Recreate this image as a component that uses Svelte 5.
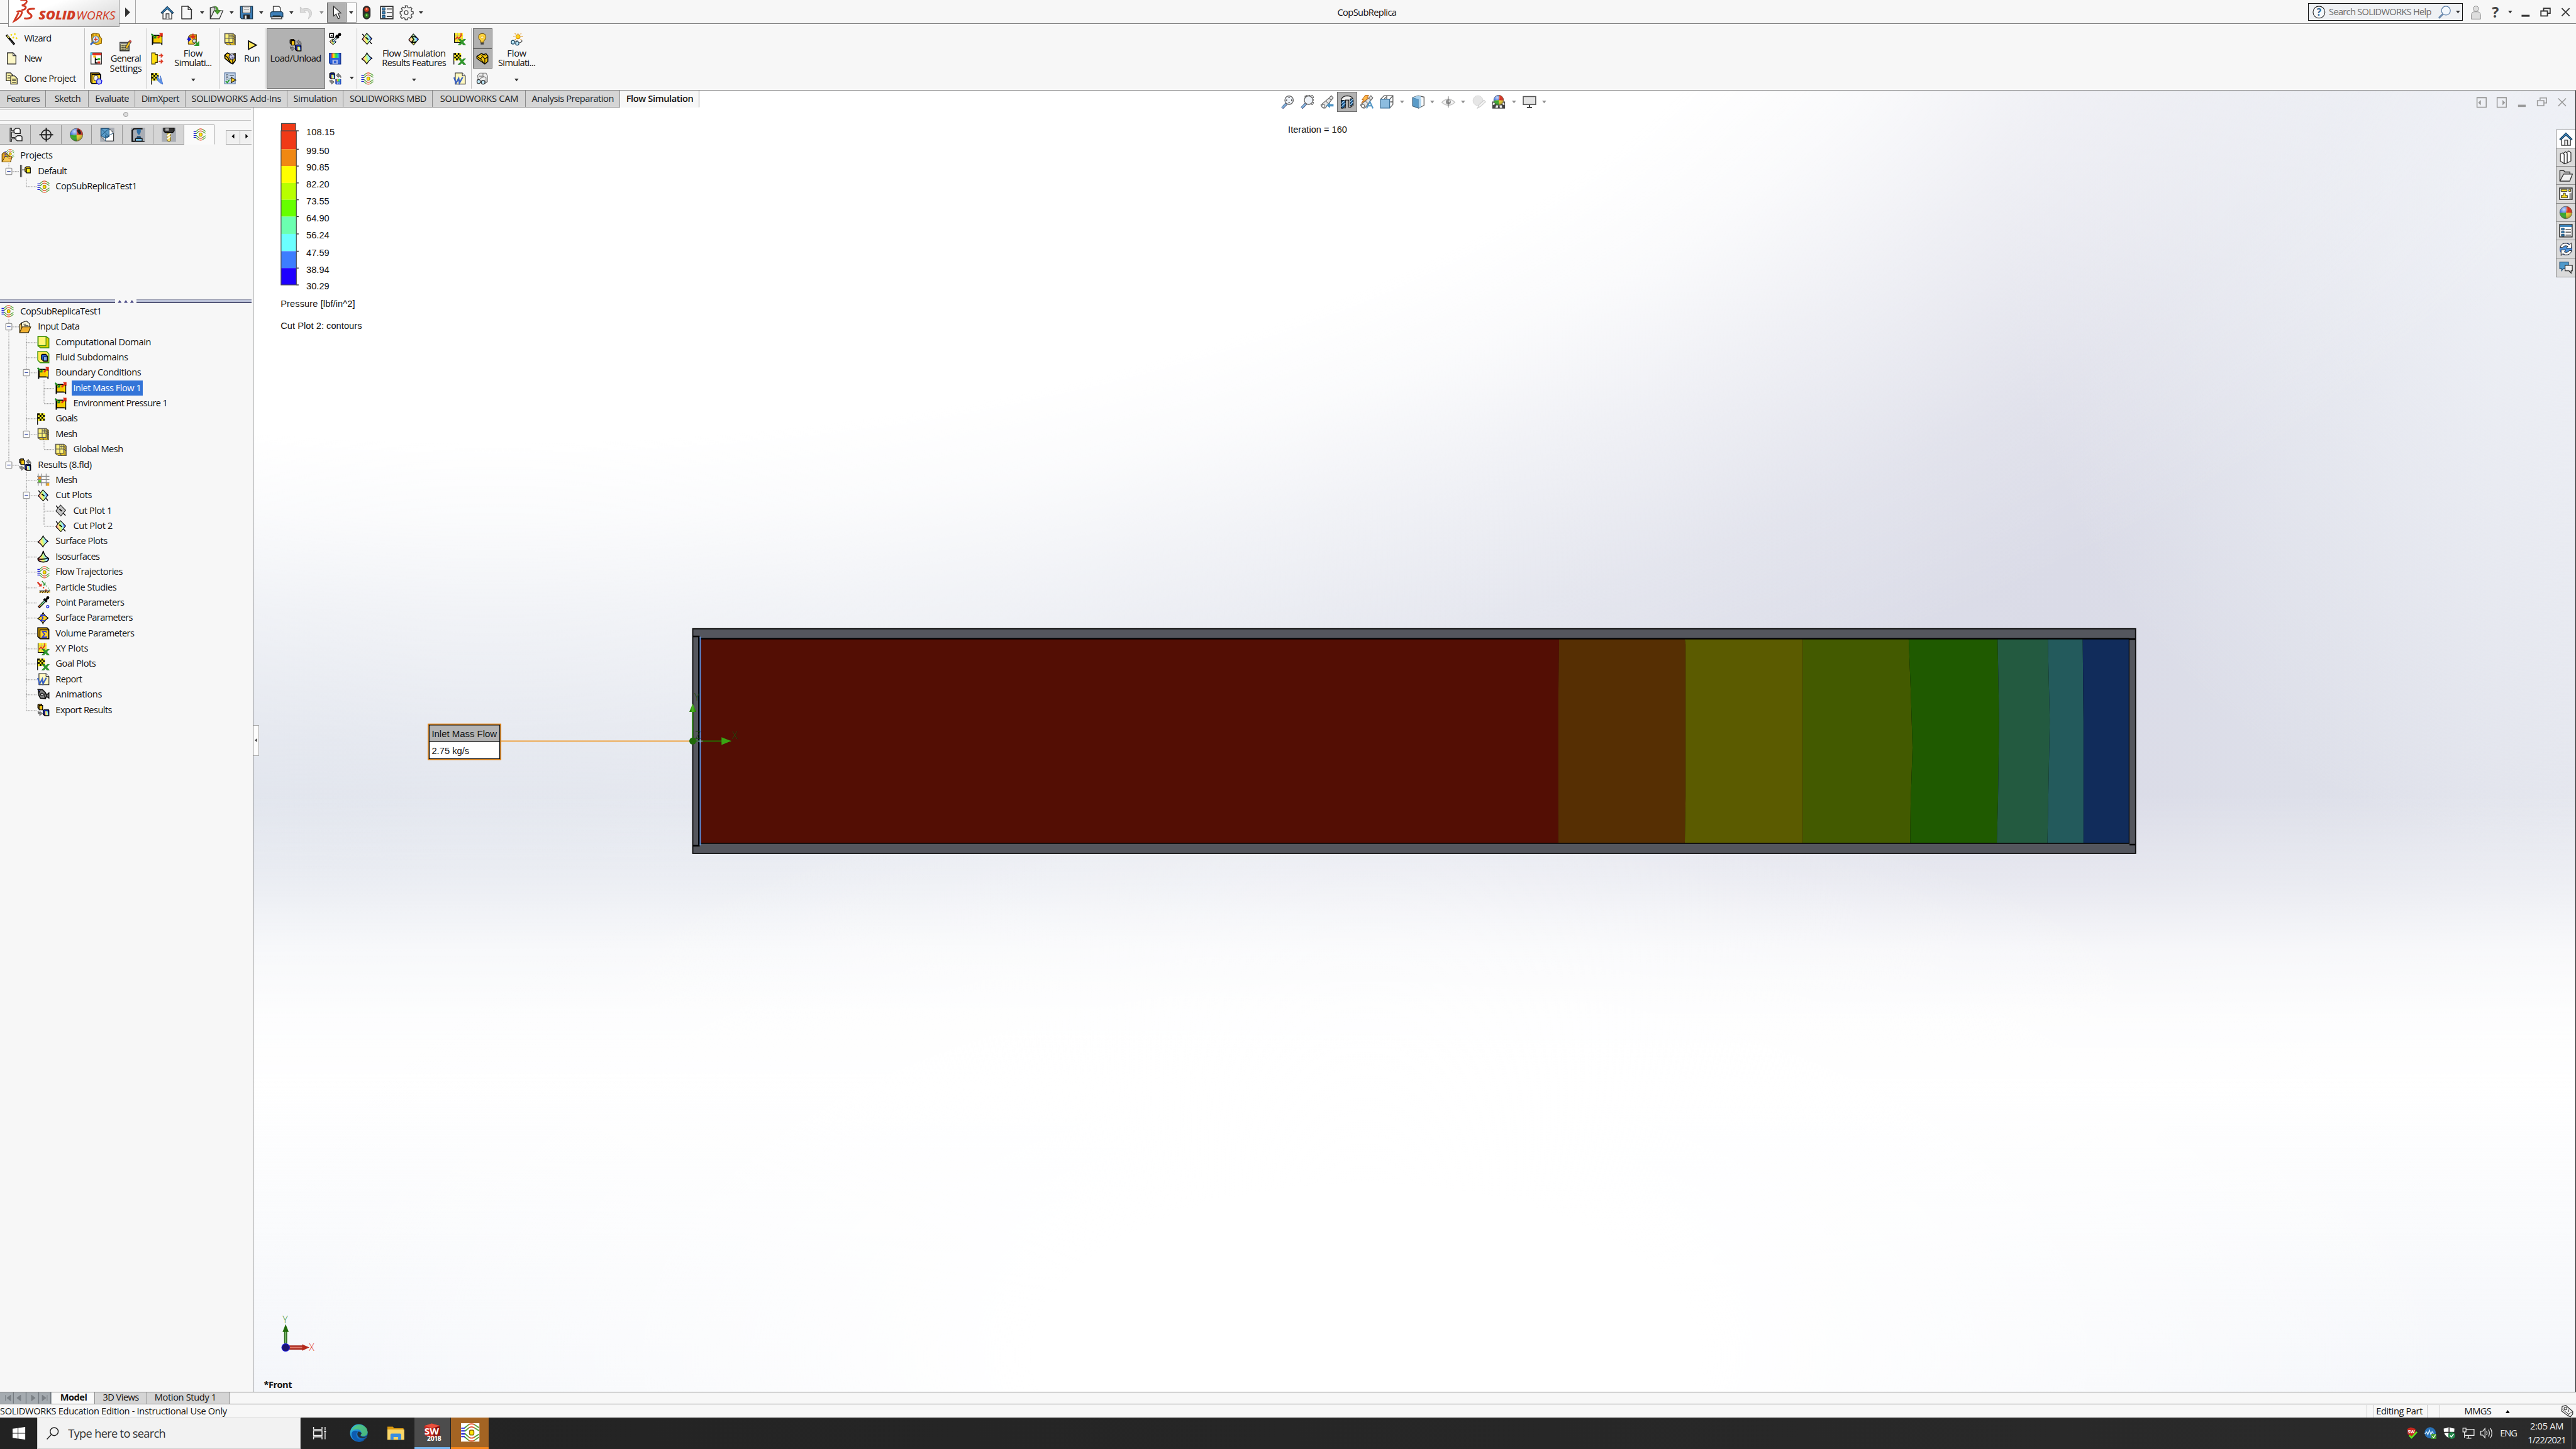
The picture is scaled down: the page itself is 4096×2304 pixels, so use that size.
<script>
  // Squeezes or opens the tracking of a label so that it occupies a given width.
  function fit(node, width) {
    const app = node.closest('.app');
    if (!app || !width) return;
    const unit = app.getBoundingClientRect().width / 6720;
    const natural = node.getBoundingClientRect().width / unit;
    const count = node.textContent.length;
    node.style.letterSpacing = `${((width - natural) / count).toFixed(3)}px`;
  }

  const diamond = 'M7.5 0.8L14.2 7.6L8 15.2L1.5 8.6Z';
  const flag =
    '<path d="M.6 1V16" stroke="#000" stroke-width="1"/><path d="M1 1L10 1V10.5L1 11Z" fill="#fff01e"/><path d="M1 1h2.4v2.4H1zM5.6 1h2.2v2.4H5.6zM3.3 3.3h2.3v2.4H3.3zM7.8 3.3H10v2.4H7.8zM1 5.7h2.4V8H1zM5.6 5.7h2.2V8H5.6zM3.3 8h2.3v2.6H3.3zM7.8 8H10v2.5H7.8z" fill="#000"/>';
  const excel =
    '<path d="M6.5 8.5h3l1.4 2 2.6-2H16l-3.4 3.6L16 16h-3.2l-1.6-2L9 16H6l3.7-3.7Z" fill="#2f9a2a" stroke="#156f17" stroke-width=".5"/>';
  const traj =
    '<g fill="none" stroke="url(#stream)" stroke-width="1"><path d="M.4 4.4H3.2L7 1.3Q9.5.2 12 1.3L16 4"/><path d="M.4 6.8H4L7.6 3.8Q9.5 2.900 11.4 3.8L16 6.600"/><path d="M.4 9.400H4L7.600 12.600Q9.500 13.500 11.400 12.600L16 9.600"/><path d="M.4 11.800H3.200L7 15Q9.500 16 12 15L16 12.200"/></g><rect x="7.700" y="6.100" width="3.800" height="4.300" rx="1.300" fill="#ffe60a" stroke="#8a6a00" stroke-width=".8"/>';
  const boundary =
    '<path d="M2.4 3.6H13.4V13.4H2.4Z" fill="#f5c800" stroke="#000" stroke-width="1.5"/><path d="M2 3V16M14.2 4V16" stroke="#000" stroke-width="1.5"/><path d="M12 5h2v8h-2z" fill="#ffe000"/><path d="M.6 1.6L4 5" stroke="#1b8a1e" stroke-width="2"/><path d="M2.5 7.6H7V3Z" fill="#1b8a1e"/><path d="M9 7L14 2" stroke="#e02b18" stroke-width="2"/><path d="M10.5.4H15.4V5.6Z" fill="#e02b18"/>';
  const meshcube =
    '<path d="M1 1H12L15 3.5V16H5L1 13.5Z" fill="#e8c21c" stroke="#555" stroke-width=".9"/><path d="M1.5 1.4H11.6V12.8H1.5Z" fill="#fff27a" stroke="#555" stroke-width=".9"/><path d="M6.6 1V13M1 7.4H12M9.3 1V7M6.6 4.2H12M13.4 3V15M12 7.5L15 9.5M12 4.3L15 6.3M7 13L9 16" stroke="#555" stroke-width=".9" fill="none"/>';
  const greyArrows =
    '<path d="M9.5 4L12.5 1V2.8Q16 3 15.6 7Q14.6 4.8 12.5 5V6.8Z" fill="#8a8a8a" stroke="#444" stroke-width=".6"/>';
  const loadCubes =
    '<path d="M1 1.4L2.5.6H6V6.8H3.4L1 5.4Z" fill="#b08000" stroke="#000"/><path d="M2.6 2.2H7.2V8H2.6Z" fill="#f7c613" stroke="#000" stroke-width="1"/><path d="M8 8.4L10 7.6H14.8L15.4 9V15.4H10L8 14Z" fill="#1733c4" stroke="#000"/><path d="M10 9.4H15V15.4H10Z" fill="url(#rb)" stroke="#000" stroke-width=".8"/>';
  const disk = (x, y, s) =>
    `<g transform="translate(${x} ${y}) scale(${s})"><path d="M.6 1.4H15.4V15.4H2L.6 14Z" fill="#2e62d9" stroke="#10308e" stroke-width="1"/><path d="M3.4 1.4h9.4v6H3.4z" fill="url(#rbh)"/><path d="M4.6 9.8h7v5.6h-7z" fill="#a7b6e8"/><path d="M6.6 11.2h3v3h-3z" fill="#2e62d9"/></g>`;
  const word =
    '<path d="M2.4.8H11.6L15.4 4.6V15.4H2.4Z" fill="#fff9c0" stroke="#222" stroke-width=".9"/><path d="M11.6.8V4.6H15.4" fill="#fff" stroke="#222" stroke-width=".8"/><path d="M.8 6.6L3.4 14L6.8 8L7.8 14L12 6.4" stroke="#3b62c4" stroke-width="1.9" fill="none"/>';
  const ball =
    '<circle cx="8" cy="8" r="7.2" fill="#e4c92c"/><path d="M8 8L8.6.8A7.2 7.2 0 0 1 15.2 8.4Z" fill="#d42f1d"/><path d="M8 8L8.6.8A7.2 7.2 0 0 0 .8 8.6Z" fill="#3a6fe0"/><path d="M8 8L.8 8.6A7.2 7.2 0 0 0 8.4 15.2Z" fill="#34a527"/><circle cx="8" cy="8" r="7.2" fill="url(#gloss)" stroke="#555" stroke-width=".5"/>';
  const sheet = (fill) =>
    `<path d="M2.2 .8H9.6L13.4 4.6V15.4H2.2Z" fill="${fill}" stroke="#333" stroke-width="1.1" stroke-linejoin="round"/><path d="M9.6.8V4.6H13.4Z" fill="#fff" stroke="#333" stroke-width=".9"/>`;
  const magnifier = (inner) =>
    `<path d="M7 10L2 15.2" stroke="#447" stroke-width="3"/><path d="M6.8 10.2L2 15" stroke="#7fb2d8" stroke-width="2"/><circle cx="10" cy="6" r="4.9" fill="#eef2f8" stroke="#666" stroke-width="1"/>${inner}`;
  const telescope =
    '<path d="M1 11.6L10.6 3.4L13 .8L15.2 3.4L13.4 5.6L6.2 15Q3 16.4 1 11.6Z" fill="#e4e4e4" stroke="#666" stroke-width=".9"/><circle cx="3.8" cy="12.8" r="1.8" fill="#fff" stroke="#777" stroke-width=".8"/><path d="M10.4 3.6L13 6.2M6.6 7L9.6 10" stroke="#777" stroke-width=".8"/>';
  const folder =
    '<path d="M1 14.6V2.4H5.4L6.8 4H12.6V6.4" fill="#c9c9c9" stroke="#333" stroke-width="1"/><path d="M1 14.6L5.4 6.4H15.6L12.4 14.6Z" fill="#f2f2f2" stroke="#333" stroke-width="1" stroke-linejoin="round"/>';
  const sigma = (c, x = 0, y = 0) =>
    `<path transform="translate(${x} ${y})" d="M10.4 5.6V4.4H5.4L8.2 8L5.2 11.6H10.6V10.4" fill="none" stroke="${c}" stroke-width="1.3"/>`;

  const icons = {
    wand: '<path d="M1 3L11.4 15.4" stroke="#000" stroke-width="2.8"/><path d="M1.8 3.6L4.4 6.8" stroke="#fff36b" stroke-width="1.3"/><path d="M5 9L11 15" stroke="#777" stroke-width=".6"/><path d="M7.4 1.6v2.4M6.2 2.8h2.4M12 .6V3M10.8 1.8H13.2M10 5.2V7.6M8.8 6.4h2.4M14.2 6V8.4M13 7.2h2.4" stroke="#f4d800" stroke-width="1.1"/>',
    newdoc: sheet('#fbf6c6'),
    clone:
      '<path d="M.8.8H6.4L9 3.4V11H.8Z" fill="#fff6a8" stroke="#222"/><path d="M2.4 4.5H6M2.4 6.5H6M2.4 8.5H6" stroke="#222" stroke-width=".8"/><path d="M6.6 4.6H11.6L15 8V15.2H6.6Z" fill="#fff6a8" stroke="#222"/><path d="M8.4 9h5M8.4 11h5M8.4 13h5" stroke="#222" stroke-width=".9"/>',
    inspect:
      '<path d="M2 2L5 .8L12 1.6L13 5L15.4 8L15 14L9 15.6L2.6 13Z" fill="#f3bd21" stroke="#8a6100" stroke-width=".9"/><path d="M4 1.6V5M8 1.4V4M12 2V6" stroke="#8a6100"/><path d="M4.4 12L.8 15.6" stroke="#2c62c4" stroke-width="2.2"/><circle cx="7.6" cy="8.6" r="4.1" fill="#dcecfb" stroke="#5a7fa8" stroke-width="1"/><path d="M7.6 6V11.2M5 8.6H10.2" stroke="#d8301f" stroke-width="1.3"/>',
    ptree:
      '<path d="M1.4 1H15V15.4H1.4Z" fill="#fff" stroke="#222"/><path d="M3 1H15V4H3Z" fill="#e02d20"/><path d="M.4.4H3.2V3.6H.4Z" fill="#49c8ee"/><path d="M4.4 4.4H8V7H4.4Z" fill="#ffc400"/><path d="M7 7V14H10M7 9.4H10" stroke="#000" fill="none" stroke-width="1.3"/><path d="M10 7.6h3.4v2.8H10z" fill="#34b827"/><path d="M10 12h3.4v2.6H10z" fill="#e02d20"/>',
    solidcirc:
      '<path d="M.8.8H12L14 3V14.6H2.6L.8 12.6Z" fill="#d8a70c" stroke="#000" stroke-width="1.1"/><path d="M2.6 3H13.6V14.4H2.6Z" fill="#ffd420" stroke="#000" stroke-width=".9"/><ellipse cx="7.8" cy="7.6" rx="2.8" ry="3.6" fill="#f3f3f3" stroke="#444"/><path d="M9.4 9.2L13 8.4L15.6 11L14.8 14.6L11.4 15.6L8.4 13.4Z" fill="#b9c4f7" stroke="#1717e6" stroke-width="1.1"/>',
    general:
      '<path d="M.8 4.6H12.4V15.4H.8Z" fill="#fff8b0" stroke="#222" stroke-width="1.3"/><path d="M.8 4.6H12.4V7H.8Z" fill="#888"/><path d="M2.6 8.8H10.6M2.6 11H10.6M2.6 13.2H10.6" stroke="#222" stroke-width="1.3" stroke-dasharray="1.6 .9"/><path d="M8.6 12L14 3" stroke="#333" stroke-width="3.6"/><path d="M9 11.4L13.2 4.4" stroke="#f7c21a" stroke-width="2.2"/><path d="M13.4 4L14.8 1.8" stroke="#c8504a" stroke-width="3"/>',
    boundary,
    vent: '<path d="M1 1H5.6V3H8.4V13.4H5.6V15.4H1Z" fill="#ffe011" stroke="#3b3200" stroke-width="1"/><path d="M10 4.4H15M12.8 2.2L15.2 4.4L12.8 6.8M10 12H15M12.8 9.8L15.2 12L12.8 14.4" stroke="#dd3b26" stroke-width="1.4" fill="none"/>',
    flagblue: flag + '<path d="M8 4Q10 9 13 10Q12.6 7 12.4 4.6Q13.6 9 15.6 15.6Q10 13.6 8 9Z" fill="#5f95ea" stroke="#2b5fc4" stroke-width=".6"/>',
    flowcube:
      '<path d="M2 4.6L5 1.6H12.6V11.4L9.6 14H2Z" fill="#dba312" stroke="#6a4a00" stroke-width=".9"/><path d="M2 5H9.8V14H2Z" fill="#ffd83a" stroke="#6a4a00" stroke-width=".8"/><path d="M8 .4V6M5.8 3.8L8 6.6L10.4 3.8Z" stroke="#df2d1c" stroke-width="1.6" fill="#df2d1c"/><path d="M0 7.6H4M2.6 5.6L5 7.6L2.6 9.8Z" stroke="#1717d8" stroke-width="1.4" fill="#1717d8"/><circle cx="10" cy="10" r="2.4" fill="#ddd" stroke="#555"/><path d="M11 11L14 14M15.6 11.4V15.8H11Z" stroke="#2c9a2a" stroke-width="1.4" fill="#2c9a2a"/>',
    meshcube,
    solvers:
      '<path d="M1 4L4.6 1L9.6 3.4L14.8 1.8V11L11.6 15.4L8.4 13.8L1.4 8Z" fill="#f3c614" stroke="#000" stroke-width="1.3"/><path d="M1.2 4.2L5 7L8.6 13.6M11.6 15V9" stroke="#000" fill="none" stroke-width="1.2"/><circle cx="10.4" cy="6" r="3.8" fill="#e4e7fb" stroke="#111" stroke-width=".8"/><path d="M7.6 4.6h5.8M7 6.6h6.8M8.4 8.4h4.4" stroke="#1c1c5a" stroke-width="1.2" stroke-dasharray="1 .9"/>',
    batch:
      '<path d="M1 .8H14.8V15H1Z" fill="#c7d6ea" stroke="#5878a4" stroke-width="1"/><path d="M3 3h2.4v2H3zM3 7h2.4v2H3z" fill="#fff" stroke="#456" stroke-width=".7"/><path d="M7.4 4H13M7.4 8H9" stroke="#456" stroke-width="1"/><path d="M2.4 11.4L4.4 13.4L7.2 9.6" stroke="#1f9a24" stroke-width="1.4" fill="none"/><path d="M9.6 6.6L15.6 10L9.6 13.4Z" fill="#ffd21e" stroke="#222" stroke-width="1"/>',
    run: '<path d="M3.4 2.6L13.6 8L3.4 13.6Z" fill="#ffe95a" stroke="#111" stroke-width="1.5"/>',
    load: loadCubes + greyArrows + '<path d="M1 10L1.6 13H3.4V15.6L7 12.6L3.6 10V11.4Z" fill="#8a8a8a" stroke="#444" stroke-width=".6"/>',
    exportres: loadCubes + '<path d="M1 10L1.6 13H3.4V15.6L7 12.6L3.6 10V11.4Z" fill="#8a8a8a" stroke="#444" stroke-width=".6"/>',
    probe:
      '<path d="M1 1H6V6H1Z" fill="#fff" stroke="#000" stroke-width="1.3"/><path d="M3 3h1.4v1.4H3z"/><path d="M1 11.6L5 8L9.4 12L5.4 15.6Z" fill="url(#rb)" stroke="#000" stroke-width=".8"/><path d="M4.4 12L11 5.4" stroke="#000" stroke-width="2.8"/><path d="M4.8 11.6L10.6 5.8" stroke="#d8f4ff" stroke-width="1.3"/><path d="M9 3.6L12.6 7M10.6 5.4L14.4 1.6" stroke="#000" stroke-width="3"/><circle cx="14" cy="2.4" r="2" />',
    savergb: disk(0, 0, 1),
    loadsave:
      '<path d="M1 1.6L2.6.8H6.6L7.4 2V8.4H3L1 7Z" fill="#1733c4" stroke="#000"/><path d="M2.6 2.6H7.4V8.4H2.6Z" fill="url(#rb)" stroke="#000" stroke-width=".8"/>' +
      greyArrows +
      '<path d="M1 10L1.6 13H3.4V15.6L7 12.6L3.6 10V11.4Z" fill="#8a8a8a" stroke="#444" stroke-width=".6"/>' +
      disk(8.4, 8.4, 0.47),
    cutplot: `<path d="${diamond}" fill="url(#rb)" stroke="#000" stroke-width=".9"/><path d="M1.800 1.600L4.400 4.800M11.400 11.600L14 14.600" stroke="#000" stroke-width="1.2"/><path d="M6 6L9.600 9" stroke="#000" stroke-width="1.4"/>`,
    cutgrey: `<path d="${diamond}" fill="#c4c4c4" stroke="#222" stroke-width=".9"/><path d="M1.800 1.600L4.400 4.800M11.400 11.600L14 14.600" stroke="#000" stroke-width="1.2"/><path d="M6 6L9.600 9" stroke="#000" stroke-width="1.4"/>`,
    surfplot: '<path d="M7.8.8Q9.4 4.600 14.4 8Q10.400 10.400 7.6 15.4Q5.600 11.600 1 8.8Q5.600 5.600 7.8.8Z" fill="url(#rb)" stroke="#000" stroke-width=".9"/>',
    traj,
    sigmaplot: `<path d="${diamond}" fill="url(#rb)" stroke="#000" stroke-width=".9"/>${sigma('#000')}`,
    xy: '<path d="M1.4.4V12.6H12" stroke="#111" stroke-width="1.2" fill="none"/><path d="M2 .4H12.4V12H2Z" fill="#fff01e"/><path d="M5.4.4V12M9 .4V12M2 4H12.4M2 8H12.4" stroke="#c9b978" stroke-width=".8"/><path d="M2.6 8.6L5 5.6L7 7.6L10 4V.6" stroke="#e02b18" stroke-width="1.3" fill="none"/>' + excel,
    goalx: flag + excel,
    word,
    goals: flag,
    bulb: '<path d="M8 1Q13 1.2 12.8 6Q12.4 8.6 10.2 10.6V12.4H5.8V10.6Q3.4 8.4 3.2 6Q3.2 1.2 8 1Z" fill="#ffd33a" stroke="#7a5a10" stroke-width=".9"/><path d="M8 4L10 6L8 8.4L6 6Z" fill="#fff3b8" stroke="#d39b14" stroke-width=".6"/><path d="M6 13H10V15.4H6Z" fill="#444"/>',
    swpart:
      '<path d="M1 5.4L7 1.6L9.6 3L13 2L15.4 5V12L11.4 15.6L1 8Z" fill="#f1c40f" stroke="#000" stroke-width="1.1"/><path d="M1 5.4L6 8.8L11 15.2M6 8.4L8.6 5.6L11.6 8.8L15.2 6M11.4 9V15M7 4.6Q9 2 12.6 4.4" stroke="#000" stroke-width=".9" fill="none"/>',
    glassgrey:
      '<path d="M2 4L5 1H13L15 5V12L11 15L3 12Z" fill="#eee" stroke="#777" stroke-width=".9"/><path d="M4 5H9V1M9 5L13 7V14M5 8L10 6" stroke="#777" fill="none" stroke-width=".9"/><ellipse cx="3.4" cy="12" rx="2.2" ry="2.6" fill="#bfe7f8" stroke="#333"/><ellipse cx="9.2" cy="13" rx="2.4" ry="2.6" fill="#bfe7f8" stroke="#333"/>',
    sunglass:
      '<circle cx="9.6" cy="4.4" r="2.9" fill="#ffd21e" stroke="#c47a00" stroke-width=".8"/><path d="M9.6 0V1M5 4.4H3.6M14 4.4h1.6M6.4 1.2L5.4.2M12.8 1.2L13.8.2M12.8 7.4L14 8.6M6.4 7.4L5.4 8.4" stroke="#e08a00" stroke-width=".9"/><ellipse cx="3" cy="11.6" rx="2.2" ry="2.4" fill="#bfe7f8" stroke="#1c4a66"/><ellipse cx="8.6" cy="13.2" rx="2.2" ry="2.4" fill="#bfe7f8" stroke="#1c4a66"/><path d="M5 10.4L9 9.6M11 12.6L14.6 11V8.8" stroke="#444" stroke-width=".9" fill="none"/>',
    projects:
      '<path d="M1 16V6L3 4H6L13.4 11L12 16Z" fill="#e8a81e" stroke="#5a3d00" stroke-width=".9"/><path d="M1 16L5 9H14L12 16Z" fill="#f9c95a" stroke="#5a3d00" stroke-width=".8"/>' +
      `<g transform="translate(4 -1) scale(.8)">${traj}</g>`,
    config:
      '<path d="M2 0V16M3.8 0V16M3.8 6.6H9" stroke="#444" stroke-width=".9" fill="none"/><path d="M8 4L9.6 2.6H14L15 4V10.4H10L8 8.6Z" fill="#c9a600" stroke="#111"/><path d="M10 4.6H15V10.6H10Z" fill="#fff01e" stroke="#111"/>',
    docs: '<path d="M1 15V5L3 3.6H6" fill="#f2c35a" stroke="#3b2a00"/><path d="M3.6 2.4L10 .4L14 4V11H4Z" fill="#fff9d8" stroke="#222" stroke-width=".9"/><path d="M6 4.4H9.4M7 6.4H12.4" stroke="#222" stroke-width=".8"/><path d="M1 15.4L4.4 8H15.4L12.4 15.4Z" fill="#f0b030" stroke="#3b2a00" stroke-width="1"/>',
    domain:
      '<path d="M1 .8H11.6L15.4 3.4V15.6H4.4L1 13Z" fill="#e6d400" stroke="#3c8e0c" stroke-width="1.1"/><path d="M1.4 1H11.6V12.8H1.4Z" fill="#fff573" stroke="#3c8e0c" stroke-width="1"/>',
    subdomain:
      '<path d="M.8.8H12.4L15.4 4V15.4H4L.8 12Z" fill="#fff27a" stroke="#3c8e0c" stroke-width="1.1"/><path d="M1.4 1.4H12V12H1.4Z" fill="#ffe94a"/><path d="M5.4 5.4L7 4.4H11.4L13.6 7V13.4H8.4L5.4 10.4Z" fill="#2c62d0" stroke="#000" stroke-width=".9"/><path d="M8.4 7.6H13.2V13H8.4Z" fill="#7fa8f0" stroke="#000" stroke-width=".8"/>',
    resmesh:
      '<path d="M1.6 4h3.6v3.4H1.6z" fill="#f08a1e"/><path d="M1.6 8.4h3.6v3.4H1.6z" fill="#57c41e"/><path d="M12 12.4h3.8V16H12z" fill="#f5a81e"/><path d="M1.4 0V16M5.4 0V16M11.8 0V16M0 3.6H16M0 7.8H16M0 12H16" stroke="#8a8a8a" stroke-width="1" fill="none"/>',
    iso: '<path d="M8 .8Q9.6 7 12.4 8.6L15.2 11Q15 15.2 8 15.4Q1 15 .8 11L3.6 8.6Q6.4 7 8 .8Z" fill="url(#rb)" stroke="#000" stroke-width="1.1"/><path d="M1 11.4Q8 12.6 15 10" stroke="#000" stroke-width="1.2" fill="none"/>',
    particle:
      '<path d="M.6 1.4L4.6 6" stroke="#d9301c" stroke-width="2"/><path d="M2 7H6V3Z" fill="#d9301c"/><path d="M6.4 0L10 4.4M7.4 5H10.4V1.6" stroke="#1f8a24" stroke-width="1" fill="none"/><path d="M7.4 7.6h1.8v1.8H7.4zM10.6 10.8h1.8v1.6h-1.8z" fill="#e2431f"/><path d="M12 6h1v1h-1zM14 8.6h1v1h-1zM15.4 11h.8v.8h-.8z" fill="#1f8a24"/><path d="M3 12.8H17V15.6H3Z" fill="#f7d06a"/><path d="M3 12.8H17M3.4 15.6L5.4 13M6.6 15.6L8.6 13M9.8 15.6L11.8 13M13 15.6L15 13" stroke="#111" stroke-width=".9"/>',
    point:
      '<path d="M2 14.6L11 5.4" stroke="#000" stroke-width="3.2"/><path d="M2.6 13.8L10.6 5.8" stroke="url(#rbu)" stroke-width="1.5"/><path d="M8.8 3.4L12.8 7.2M11 5L14 2" stroke="#000" stroke-width="2.8"/><circle cx="14" cy="2" r="1.9"/><circle cx="13.8" cy="13.6" r="1.5" fill="#fff" stroke="#1f2fe0" stroke-width="1.2"/>',
    surfparam: `<path d="M7.8.8Q9 4 14.4 8Q9.6 11 7.6 15.4Q6 11 1 8.8Q6 5 7.8.8Z" fill="#fbd022" stroke="#000" stroke-width="1"/>${sigma('#1f2fe0', -0.4)}`,
    volparam: `<path d="M.8 1H13L15.4 3.4V15.4H4L.8 12.4Z" fill="#b98a00" stroke="#000" stroke-width="1.1"/><path d="M3.8 3.8H15V15.2H3.8Z" fill="#fcd12a" stroke="#000" stroke-width=".9"/>${sigma('#1f2fe0', 1.6, 1.6)}`,
    anim: '<path d="M1.4 1.4H7L9 3.4L11 5.4V13L4.4 12.4L2.4 9Z" fill="#8a8a8a" stroke="#111" stroke-width="1.4"/><path d="M1 1.2H4L3.4 5Z" fill="#5a67c4" stroke="#111"/><circle cx="6.4" cy="7.6" r="1.8" fill="#ddd" stroke="#111"/><path d="M10 7H12.4V11H10ZM12.6 8L15.4 5.4V12.4L12.6 10.4Z" fill="#888" stroke="#111" stroke-width="1.2"/>',

    home: '<path d="M3 7.6V15.4H13.2V7.6L8 2.6Z" fill="#fafafa" stroke="#333" stroke-width="1"/><path d="M6.6 15.2V9.4H10V15.2" fill="#e4e4e4" stroke="#333" stroke-width=".9"/><path d="M.8 8.2L8 .9L15.2 8.2L14 9.2L8 3.8L2 9.2Z" fill="#3c86bd" stroke="#173a56" stroke-width=".8"/>',
    doc: sheet('#f7f7f7'),
    open: '<path d="M1 15V2.4L4.6 1.4L6.4 2.8V5" fill="#ddd" stroke="#333"/><path d="M1 15.2L5.4 6H15.6L11.6 15.2Z" fill="#f1f1f1" stroke="#333" stroke-width=".9"/><path d="M5.4.8Q10 .4 10.4 5.6H12.8L9.4 10L5.8 5.6H8.2Q8.4 2.4 5.4.8Z" fill="#4aa02c" stroke="#2c6a14" stroke-width=".5"/>',
    save: '<path d="M1 .8H15V15.2H2.4L1 13.8Z" fill="#3d7fb8" stroke="#173a56" stroke-width="1"/><path d="M3.6.8h8.8v7.6H3.6z" fill="#f7f7f7" stroke="#333" stroke-width=".7"/><path d="M5 2.6h6M5 4.4h6M5 6.2h6" stroke="#777" stroke-width=".7"/><path d="M4.4 10.4h7.4v4.8H4.4z" fill="#222"/><path d="M6 11.4h2v3.8H6z" fill="#eee"/>',
    print:
      '<path d="M4 7V.8H10.6L12.2 2.4V7" fill="#f9f9f9" stroke="#333" stroke-width=".9"/><path d="M.8 8.4L2.4 7H13.6L15.2 8.4V13H.8Z" fill="#3d7fb8" stroke="#173a56" stroke-width=".9"/><path d="M3.6 11.4H12.4V13H3.6Z" fill="#122"/><path d="M2.6 13H13.4L14 15.2H2Z" fill="#eee" stroke="#333" stroke-width=".8"/>',
    undo: '<path d="M1 1.4V8H7.4L5.4 5.8Q10.6 4.4 11.4 9.4Q11.6 12 10.4 15.4Q15.4 11.6 14 7Q12 1.6 3.4 3.8Z" fill="#dcdcdc" stroke="#c2c2c2" stroke-width=".6"/>',
    cursor: '<path d="M4 .8V12L6.8 9.6L9.2 15.2L11.4 14.2L9 8.8L12.4 8.6Z" fill="#fff" stroke="#222" stroke-width=".8"/>',
    traffic:
      '<rect x="3.8" y=".4" width="8.4" height="15.2" rx="4.2" fill="#2c2c2c" stroke="#111" stroke-width=".5"/><circle cx="8" cy="4.6" r="2.6" fill="#d83b1c"/><circle cx="8" cy="4" r="1" fill="#ff9a80"/><circle cx="8" cy="11.4" r="2.6" fill="#2e7d1e"/><circle cx="8" cy="11" r="1" fill="#98e07c"/>',
    list: '<path d="M.8.8H15.2V15.2H.8Z" fill="#f7f7f7" stroke="#333" stroke-width="1.2"/><path d="M2.8 2.4H6V5.2H2.8zM2.8 6.8H6V9.6H2.8zM2.8 11.2H6V14H2.8z" fill="#3c86bd" stroke="#173a56" stroke-width=".7"/><path d="M8 3.8h6M8 8.2h6M8 12.6h6" stroke="#333" stroke-width="1"/>',
    gear: '<path d="M6.8 1h2.4l.5 2 1.5.7 1.8-1.1 1.6 1.7-1 1.8.6 1.5 1.9.4v2.3l-1.9.5-.6 1.5 1 1.7-1.6 1.7-1.8-1-1.5.6-.5 2H6.8l-.5-2-1.5-.6-1.8 1-1.6-1.7 1-1.7-.6-1.5L.9 10.3V8L2.8 7.6l.6-1.5-1-1.8L4 2.6l1.800 1.100 1.500-.700Z" transform="translate(0 -.9)" fill="#f4f4f4" stroke="#444" stroke-width="1"/><ellipse cx="8" cy="8" rx="2.1" ry="2.3" fill="#fff" stroke="#444" stroke-width="1"/>',

    fmtree:
      '<path d="M2 .6V15.6H3.6V12.6H7V11H3.6V5H7V3.4H3.6V.6Z" fill="#eee" stroke="#222" stroke-width=".8"/><path d="M6.4 2.2L8.4.8H12L13.4 2.2V6.6H8L6.4 5.4ZM8.4 10.4L10.4 9H14L15.4 10.4V14.8H10L8.4 13.6Z" fill="#fff" stroke="#222" stroke-width="1"/>',
    target: '<circle cx="8" cy="8" r="5.4" fill="none" stroke="#222" stroke-width="1.2"/><path d="M8 .2V15.8M.2 8H15.8" stroke="#222" stroke-width="1.5"/>',
    ball,
    ballcut: ball + '<ellipse cx="11" cy="4.6" rx="2" ry="3.4" transform="rotate(-28 11 4.6)" fill="#222" stroke="#c33" stroke-width=".8"/>',
    cfgcube:
      '<path d="M0 0H16V16H0Z" fill="#a9adb4"/><path d="M1 1H10L15 6V15H6L1 10Z" fill="#fff" stroke="#333" stroke-width=".7"/><path d="M1 1H10V10L6 12L1 9Z" fill="#5a9bc8" stroke="#1d5078" stroke-width=".8"/><path d="M1 1L10 10M10 1L1 9M6 11L15 6M6 15V8" stroke="#1d5078" stroke-width=".7"/>',
    printer3d:
      '<path d="M0 0H16V16H0Z" fill="#a9adb4"/><path d="M13 1.2H3.4L1.4 3.2V15.4H4.6" fill="none" stroke="#111" stroke-width="1.5"/><path d="M6.6 1.6h4.4v3.4L9.6 8H8L6.6 5z" fill="#2f6fa5"/><path d="M5 12.4H12.6V15.2H5Z" fill="#7cc4ea" stroke="#111" stroke-width=".9"/><path d="M7 9.6h3.6l1 2H6z" fill="#1d4a70"/><path d="M4.6 15.5h10.6" stroke="#111"/>',
    drill:
      '<path d="M0 0H16V16H0Z" fill="#a9adb4"/><path d="M2 .4H14V3.6L12.4 5.4H3.6L2 3.6Z" fill="#333" stroke="#000" stroke-width=".8"/><path d="M4 .8h4v2.6H4z" fill="#aaa"/><path d="M6 6.2H10V14.6L8 15.6L6 14.6Z" fill="#f3dc6a" stroke="#6a5a1a" stroke-width=".7"/><path d="M6 9.4L10 6.4M6 12.8L10 9.8" stroke="#fff" stroke-width="1.2"/>',

    zoomfit: magnifier('<path d="M10 2L8.9 3.6H11.1ZM10 10L8.9 8.4H11.1ZM6 6L7.6 4.9V7.1ZM14 6L12.4 4.9V7.1Z" fill="#444"/>'),
    zoomarea: '<path d="M6 3V.6H15.4V11H13" fill="none" stroke="#555" stroke-width="1" stroke-dasharray="2 1.2"/>' + magnifier(''),
    prevview: telescope + '<path d="M15.6 10.6H11.6V8.8L7.2 12L11.6 15.2V13.4H15.6Z" fill="#4f94c4"/>',
    section:
      '<path d="M1.2 6Q2 1.2 8 1Q14.6 1.2 15 6V12L12 14.4H10V6H6V15H1.2Z" fill="#eee" stroke="#222" stroke-width=".9"/><path d="M1.4 6.2H6V12.4L3.4 15.4H1.4ZM11.6 4.4H14.8V11L11.6 13.4Z" fill="#1f5f9a" stroke="#111" stroke-width=".7"/><path d="M1.4 10L5.4 6.4M1.4 13.6L6 9.4M11.6 8L14.8 5M11.6 11.4L14.8 8.4" stroke="#b9dcf2" stroke-width=".8"/>',
    dynview: telescope + '<path d="M6.4.4H10.4L8.4 3.6H10.4L2 9.6L4.6 5.6H2.6Z" fill="#ffb84a" stroke="#b8641a" stroke-width=".7"/><path d="M8 15.6L11.8 7.6L15.4 15.6M9.6 12.6H14" stroke="#4f94c4" stroke-width="1.5" fill="none"/>',
    orient:
      '<path d="M.8 5L5 .8H15.2V11L11.4 15.2" fill="#fff" stroke="#555" stroke-width=".9"/><path d="M.8 5H11.4V15.2H.8Z" fill="#8cbcdf" stroke="#3a6f98" stroke-width=".9"/><path d="M11.4 5L15.2.8M8 .8V4.4M15 8H12M5.4 4.4L7 2.6" stroke="#555" stroke-width="1"/>',
    display:
      '<path d="M1.6 3L8 .8L14.8 2.4V12L8.6 15.4L1.6 12.8Z" fill="#fafafa" stroke="#555" stroke-width=".9"/><path d="M1.6 3L8.6 5V15.2L1.6 12.8Z" fill="#5a9bc8" stroke="#3a6f98" stroke-width=".6"/><path d="M8.6 5L11.4 4V14L8.6 15.2Z" fill="#a9d2ee"/><path d="M1.6 3L8 .8L11 1.6L11 4L8.6 5Z" fill="#a9d2ee"/>',
    eye: '<path d="M.4 8.600Q8 .8 15.600 8.600Q8 15.400 .4 8.600Z" fill="#f4f4f4" stroke="#c4c4c4" stroke-width="1"/><circle cx="8" cy="8" r="2.900" fill="#8f8f8f"/><circle cx="8.8" cy="7.200" r="1.100" fill="#e4e4e4"/><path d="M8 1.600V14.600" stroke="#6a6a6a" stroke-width=".7"/>',
    appear: '<circle cx="6.6" cy="6.6" r="5.8" fill="#e6e6e6" stroke="#d4d4d4" stroke-width=".6"/><path d="M6 15.4L8 11L13.6 6L15.4 8L10 13Z" fill="#f2f2f2" stroke="#ccc" stroke-width=".8"/>',
    scene:
      '<path d="M.6 7.6H15.4V15.8H.6Z" fill="#444"/><path d="M1.6 9H4L3 11.5H1.2ZM5 12H7.6L7 15H4.2ZM12 9H14.4L14.8 11.5H13ZM9 12H11.6L12 15H9.4Z" fill="#eee"/>' +
      `<g transform="translate(1.6 -.4) scale(.8)">${ball}</g>`,
    monitor: '<path d="M.8 1.8H15.2V11.2H.8Z" fill="#e4e4e4" stroke="#555" stroke-width="1.1"/><path d="M8 11.2V14M5 14.6H11" stroke="#444" stroke-width="1.5"/>',
    books:
      '<path d="M1.6 4L4 3L6 4.6V15.4L1.6 12.6ZM5 3.4L7.6 1.6L9.4 3.4V14.6L6 15.4V5ZM9 2.6L11.4.8L13.8 2.8V12.4L9.6 14.6V4Z" fill="#fff" stroke="#333" stroke-width=".9"/>',
    folder,
    palette:
      '<path d="M.8 1.4H15.2V14.6H.8Z" fill="#fff" stroke="#222" stroke-width="1.1"/><path d="M2.4 3H9.4V5.4H2.4zM11.2 3H13.6V5.4H11.2zM5 7.4H7.4V10H9.8V12.8H2.6V10H5Z" fill="#ffdf1e" stroke="#333" stroke-width=".7"/><path d="M12 7.4h3v7h-3z" fill="#999"/>',
    props:
      '<path d="M.8.8H15.2V15.2H.8Z" fill="#fff" stroke="#222" stroke-width="1.1"/><path d="M1.2 1.2H14.8V3.6H1.2Z" fill="#3c86bd"/><path d="M2.8 5H6V7.2H2.8zM2.8 8.6H6V10.6H2.8zM2.8 12H6V14H2.8z" fill="#3c86bd" stroke="#173a56" stroke-width=".6"/><path d="M7.6 6.2H13.8M7.6 9.6H13.8M7.6 13H13.8" stroke="#333" stroke-width=".9"/>',
    sync: '<circle cx="8" cy="8" r="7" fill="#4d94e0" stroke="#1c3fa0" stroke-width=".7"/><path d="M1.2 6Q3 .8 9 1.4L12 3L14.4.8V7H8.6L10.4 4.8Q6 3 4 6.6ZM14.8 10Q13 15.2 7 14.8L4.4 13.4L2.4 15.6V9H8L6 11.4Q10 13 12 9.6Z" fill="#fff" stroke="#222" stroke-width=".7"/>',
    chat: '<path d="M.8 2H11V9.6H5L3 12V9.6H.8Z" fill="#4f9acb" stroke="#1d4a70" stroke-width=".8"/><path d="M7 5.8H15.4V12.2H14V14.8L11.6 12.2H7Z" fill="#f2f2f2" stroke="#222" stroke-width=".9"/>',
    tag: '<path d="M1.6 2L6.4.6L15.4 8.4V12L12.4 15.4L9.6 14.4L1 8Z" fill="#eee" stroke="#333" stroke-width="1"/><path d="M1.8 5.6L10 12L15 8.8M10 12L9.6 14" stroke="#333" fill="none" stroke-width=".8"/><ellipse cx="6" cy="4.6" rx="1.8" ry="1.7" fill="#fff" stroke="#333" stroke-width=".9"/><path d="M9.6 6V9" stroke="#333"/>'
  };

  const titleTools = [
    ['home', 56], ['doc', 46], ['caret', 31], ['open', 46], ['caret', 33], ['save', 45], ['caret', 32],
    ['print', 47], ['caret', 30], ['undo', 48], ['caret', 31, 'dim'], ['cursor', 50, 'pressed'],
    ['caret', 27, 'boxed'], ['traffic', 52], ['list', 53], ['gear', 47], ['caret', 30]
  ];

  const hudTools = [
    ['zoomfit', 48], ['zoomarea', 54], ['prevview', 52], ['section', 52, 'pressed'], ['dynview', 51],
    ['orient', 54], ['caret', 24, 'dim'], ['display', 60], ['caret', 16, 'dim'], ['eye', 66],
    ['caret', 12, 'dim'], ['appear', 72], ['scene', 28], ['caret', 52, 'dim'], ['monitor', 30], ['caret', 48, 'dim']
  ];

  const commandTabs = [
    ['Features', 120, 87], ['Sketch', 112, 68], ['Evaluate', 120, 88], ['DimXpert', 132, 99],
    ['SOLIDWORKS Add-Ins', 265, 234], ['Simulation', 146, 114], ['SOLIDWORKS MBD', 234, 200],
    ['SOLIDWORKS CAM', 242, 204], ['Analysis Preparation', 246, 214], ['Flow Simulation', 208, 175]
  ];

  const managerTabs = ['fmtree', 'target', 'ballcut', 'cfgcube', 'printer3d', 'drill', 'traj'];
  const paneTabs = ['home', 'books', 'folder', 'palette', 'ball', 'props', 'sync', 'chat'];

  // Tree rows: guide letters, icon, label, label width.
  // v line, t branch, l last branch, e expander, f last expander, - blank
  const projectTree = [
    ['', 'projects', 'Projects', 84],
    ['f', 'config', 'Default', 75],
    ['-l', 'traj', 'CopSubReplicaTest1', 212]
  ];
  const studyTree = [
    ['', 'traj', 'CopSubReplicaTest1', 212],
    ['e', 'docs', 'Input Data', 108],
    ['vt', 'domain', 'Computational Domain', 249],
    ['vt', 'subdomain', 'Fluid Subdomains', 189],
    ['ve', 'boundary', 'Boundary Conditions', 223],
    ['vvt', 'boundary', 'Inlet Mass Flow 1', 177],
    ['vvl', 'boundary', 'Environment Pressure 1', 246],
    ['vt', 'goals', 'Goals', 57],
    ['vf', 'meshcube', 'Mesh', 56],
    ['v-l', 'meshcube', 'Global Mesh', 130],
    ['f', 'load', 'Results (8.fld)', 140],
    ['-t', 'resmesh', 'Mesh', 56],
    ['-e', 'cutplot', 'Cut Plots', 95],
    ['-vt', 'cutgrey', 'Cut Plot 1', 101],
    ['-vl', 'cutplot', 'Cut Plot 2', 103],
    ['-t', 'surfplot', 'Surface Plots', 135],
    ['-t', 'iso', 'Isosurfaces', 115],
    ['-t', 'traj', 'Flow Trajectories', 175],
    ['-t', 'particle', 'Particle Studies', 159],
    ['-t', 'point', 'Point Parameters', 179],
    ['-t', 'surfparam', 'Surface Parameters', 201],
    ['-t', 'volparam', 'Volume Parameters', 205],
    ['-t', 'xy', 'XY Plots', 85],
    ['-t', 'goalx', 'Goal Plots', 105],
    ['-t', 'word', 'Report', 69],
    ['-t', 'anim', 'Animations', 121],
    ['-l', 'exportres', 'Export Results', 147]
  ];
  const selected = 'Inlet Mass Flow 1';

  const legend = [
    [341, '#f03a17', '108.15'], [389, '#f08813', '99.50'], [433, '#ffff00', '90.85'],
    [477, '#b8ff00', '82.20'], [521, '#66ff00', '73.55'], [565, '#6bffb0', '64.90'],
    [610, '#6bffff', '56.24'], [655, '#3d7dff', '47.59'], [699, '#1e00ff', '38.94'], [743, null, '30.29']
  ];

  const contours = [
    ['#530e04', 'M1826 1668H4066L4065 1820L4064 2198H1826Z'],
    ['#562f03', 'M4066 1668H4394L4396 1680V2080L4394 2198H4064L4064 1820Z'],
    ['#5b5b00', 'M4394 1668H4702V2198H4394L4396 2080V1680Z'],
    ['#435a00', 'M4702 1668H4978L4984 1820L4988 1950L4983 2100L4982 2198H4702Z'],
    ['#1f5a00', 'M4978 1668H5210L5214 1880L5211 2090L5208 2198H4982L4983 2100L4988 1950L4984 1820Z'],
    ['#235a40', 'M5210 1668H5341L5346 1880L5340 2198H5208L5211 2090L5214 1880Z'],
    ['#235a5c', 'M5341 1668H5432L5434 1880L5434 2198H5340L5346 1880Z'],
    ['#112c5b', 'M5432 1668H5552V2198H5434V1880Z']
  ];
</script>

{#snippet icon(name)}
  {#if name === 'caret'}
    <svg class="caret" viewBox="0 0 11 7"><path d="M0 0H11L5.5 7Z" /></svg>
  {:else}
    <svg class="icon" viewBox="0 0 16 16">{@html icons[name]}</svg>
  {/if}
{/snippet}

{#snippet column(names)}
  <div class="column">
    {#each names as name}
      <div class="cell">{@render icon(name)}</div>
    {/each}
  </div>
{/snippet}

{#snippet big(name, lines, caret)}
  <div class="big" class:raised={caret}>
    {@render icon(name)}
    {#each lines as [text, width]}
      <div class="line"><span use:fit={width}>{text}</span></div>
    {/each}
    {#if caret}
      <div class="drop">{@render icon('caret')}</div>
    {/if}
  </div>
{/snippet}

{#snippet tree(rows)}
  <div class="tree">
    {#each rows as [guides, name, text, width]}
      <div class="row">
        {#each guides.split('') as g}
          <svg class="guide" viewBox="0 0 46 40">
            {#if g !== '-'}
              <path class="dots" d="M23 0V{g === 'l' || g === 'f' ? 20 : 40}" />
              {#if g !== 'v'}<path class="dots" d="M23 21H50" />{/if}
              {#if g === 'e' || g === 'f'}
                <rect x="15" y="12" width="16" height="17" rx="1.5" fill="#fcfcfc" stroke="#9a9a9a" stroke-width="2" />
                <path d="M18.5 20.5H27.5" stroke="#3c50a8" stroke-width="2" />
              {/if}
            {/if}
          </svg>
        {/each}
        <span class="rowicon">{@render icon(name)}</span>
        <span class="label" class:selected={text === selected}><span use:fit={width}>{text}</span></span>
      </div>
    {/each}
  </div>
{/snippet}

<svg class="defs">
  <defs>
    <linearGradient id="rb" x1="0" y1=".62" x2="1" y2=".38">
      <stop offset="0" stop-color="#ff3a2a" /><stop offset=".22" stop-color="#ffc9b4" /><stop offset=".38" stop-color="#fbf75a" />
      <stop offset=".54" stop-color="#b4f4a0" /><stop offset=".7" stop-color="#a4f2ff" /><stop offset=".84" stop-color="#5a8cff" /><stop offset="1" stop-color="#1414f0" />
    </linearGradient>
    <linearGradient id="stream" gradientUnits="userSpaceOnUse" x1="0" y1="0" x2="16" y2="0">
      <stop offset=".2" stop-color="#1818d4" /><stop offset=".26" stop-color="#3fa02e" /><stop offset=".4" stop-color="#5aa83a" />
      <stop offset=".5" stop-color="#e8502c" /><stop offset=".7" stop-color="#e8502c" /><stop offset=".8" stop-color="#5aa83a" />
    </linearGradient>
    <linearGradient id="rbh">
      <stop offset="0" stop-color="#ff2a1a" /><stop offset=".3" stop-color="#ffe01a" /><stop offset=".6" stop-color="#2ce03a" /><stop offset="1" stop-color="#24c8f0" />
    </linearGradient>
    <linearGradient id="rbu" gradientUnits="userSpaceOnUse" x1="2" y1="14" x2="11" y2="5">
      <stop offset="0" stop-color="#ff4a2a" /><stop offset=".4" stop-color="#7ef07a" /><stop offset="1" stop-color="#8fd8ff" />
    </linearGradient>
    <radialGradient id="gloss" cx=".35" cy=".25" r=".8">
      <stop offset="0" stop-color="#fff" stop-opacity=".75" /><stop offset=".45" stop-color="#fff" stop-opacity="0" /><stop offset="1" stop-color="#000" stop-opacity=".35" />
    </radialGradient>
    <linearGradient id="edge" x1="0" y1="0" x2="1" y2="1">
      <stop offset="0" stop-color="#3bd0e0" /><stop offset=".5" stop-color="#1b7fd6" /><stop offset="1" stop-color="#0c4fa0" />
    </linearGradient>
    <linearGradient id="arrowgreen"><stop offset="0" stop-color="#1c6b00" /><stop offset=".5" stop-color="#4bb81e" /><stop offset="1" stop-color="#1c6b00" /></linearGradient>
  </defs>
</svg>

<div class="app">
  <header class="titlebar">
    <div class="brand">
      <svg viewBox="0 0 288 69">
        <g fill="none" stroke="#d13a24" stroke-linecap="round">
          <path d="M32 0Q50 -1 46 6Q43 12 34 14Q46 15 44 21Q42 25 35 26" stroke-width="4.5" />
          <path d="M22 30Q36 27 34 34Q31 46 14 55L25 34" stroke-width="4.5" />
          <path d="M66 23Q50 22 49 28Q49 33 56 37Q62 41 57 46Q52 49 42 48" stroke-width="5" />
        </g>
        <text class="solid" x="78" y="51" textLength="96" lengthAdjust="spacingAndGlyphs">SOLID</text>
        <text class="works" x="176" y="51" textLength="102" lengthAdjust="spacingAndGlyphs">WORKS</text>
      </svg>
    </div>
    <div class="flyout"><svg viewBox="0 0 13 25"><path d="M0 0L13 12.5L0 25Z" fill="#333" /></svg></div>
    <div class="titletools">
      {#each titleTools as [name, width, state]}
        <div class="tool {state ?? ''}" style:width="{width}px">{@render icon(name)}</div>
      {/each}
    </div>
    <div class="doctitle"><span use:fit={154}>CopSubReplica</span></div>
    <div class="helpsearch">
      <svg class="qmark" viewBox="0 0 34 34"><circle cx="17" cy="17" r="15.5" fill="#f6f8fa" stroke="#222" stroke-width="1.8" /><text x="17" y="26" text-anchor="middle">?</text></svg>
      <span class="placeholder" use:fit={267}>Search SOLIDWORKS Help</span>
      <svg class="lens" viewBox="0 0 34 34"><path d="M11 23L3 31" stroke="#6d8cb0" stroke-width="5" stroke-linecap="round" /><circle cx="20" cy="13" r="11.5" fill="#f3f8fd" stroke="#5c7fa8" stroke-width="2" /></svg>
      {@render icon('caret')}
    </div>
    <div class="windowtools">
      <svg viewBox="0 0 26 36" class="person"><circle cx="13" cy="8" r="7" fill="#dedede" stroke="#888" stroke-width="1.5" /><path d="M1 35V24Q2 16 9 16H17Q24 16 25 24V35Z" fill="#dedede" stroke="#888" stroke-width="1.5" /></svg>
      <span class="question">?</span>
      {@render icon('caret')}
      <svg viewBox="0 0 28 24" class="win"><path d="M4 21.5H25" stroke="#333" stroke-width="5" /></svg>
      <svg viewBox="0 0 28 24" class="win"><path d="M9 8V2H26V15H20" fill="none" stroke="#333" stroke-width="3" /><path d="M2 9H19V22H2Z" fill="none" stroke="#333" stroke-width="3" /></svg>
      <svg viewBox="0 0 28 24" class="win"><path d="M4 2L24 22M24 2L4 22" stroke="#333" stroke-width="3" /></svg>
    </div>
  </header>

  <section class="ribbon">
    <div class="group g1">
      {#each [['wand', 'Wizard', 71], ['newdoc', 'New', 45], ['clone', 'Clone Project', 135]] as [name, text, width]}
        <div class="cmd">{@render icon(name)}<span use:fit={width}>{text}</span></div>
      {/each}
    </div>
    <div class="group g2">
      {@render column(['inspect', 'ptree', 'solidcirc'])}
      {@render big('general', [['General', 79], ['Settings', 83]], false)}
    </div>
    <div class="group g3">
      {@render column(['boundary', 'vent', 'flagblue'])}
      {@render big('flowcube', [['Flow', 50], ['Simulati...', 97]], true)}
    </div>
    <div class="group g4">
      {@render column(['meshcube', 'solvers', 'batch'])}
      {@render big('run', [['Run', 41]], false)}
    </div>
    <div class="group g5">
      <div class="loadbtn">{@render big('load', [['Load/Unload', 133]], false)}</div>
      {@render column(['probe', 'savergb', 'loadsave'])}
      <div class="sidecaret">{@render icon('caret')}</div>
    </div>
    <div class="group g6">
      {@render column(['cutplot', 'surfplot', 'traj'])}
      {@render big('sigmaplot', [['Flow Simulation', 165], ['Results Features', 167]], true)}
      {@render column(['xy', 'goalx', 'word'])}
    </div>
    <div class="group g7">
      {@render column(['bulb', 'swpart', 'glassgrey'])}
      {@render big('sunglass', [['Flow', 50], ['Simulati...', 97]], true)}
    </div>
  </section>

  <main class="workspace">
    <nav class="commandtabs">
      {#each commandTabs as [text, width, textWidth], i}
        <div class="ctab" class:active={i === 9} style:width="{width}px"><span use:fit={textWidth}>{text}</span></div>
      {/each}
    </nav>

    <aside class="panel">
      <div class="grip"><i></i></div>
      <div class="managertabs">
        {#each managerTabs as name, i}
          <div class="mtab" class:active={i === 6}>{@render icon(name)}</div>
        {/each}
        <div class="scrollers">
          <span><svg viewBox="0 0 8 14"><path d="M8 0V14L0 7Z" /></svg></span>
          <span><svg viewBox="0 0 8 14"><path d="M0 0V14L8 7Z" /></svg></span>
        </div>
      </div>
      <div class="projects">{@render tree(projectTree)}</div>
      <div class="splitter">
        <i></i>
        <svg viewBox="0 0 55 10"><path d="M7 9L12 1.5L17 9ZM23 9L28 1.5L33 9ZM39 9L44 1.5L49 9Z" fill="#4a4a86" /></svg>
        <i></i>
      </div>
      {@render tree(studyTree)}
    </aside>

    <section class="viewport">
      <svg class="scene" viewBox="660 236 6057 3394">
        <!-- colour legend -->
        <rect x="733" y="322" width="37" height="20" fill="#f03a17" stroke="#444" stroke-width="2" />
        {#each legend as [y, color, value], i}
          {#if color}
            <rect x="732" {y} width="40" height={legend[i + 1][0] - y} fill={color} />
          {/if}
          <path d="M772 {y}H778" stroke="#111" stroke-width="2" />
          <text class="arial" x="798" y={y + 12} textLength={i === 0 ? 74 : 60}>{value}</text>
        {/each}
        <rect x="732" y="341" width="40" height="402" fill="none" stroke="#4a4a4a" stroke-width="2" />
        <text class="arial" x="731" y="801" textLength="194">Pressure [lbf/in^2]</text>
        <text class="arial" x="731" y="858" textLength="212">Cut Plot 2: contours</text>
        <text class="arial" x="3359" y="346" textLength="154" lengthAdjust="spacingAndGlyphs">Iteration = 160</text>

        <!-- sectioned tube with pressure contours -->
        <rect x="1806" y="1640" width="3764" height="586" fill="#54565d" stroke="#0c0c0c" stroke-width="3" />
        <rect x="1822" y="1664" width="3732" height="537" fill="#000" />
        {#each contours as [color, d]}
          <path {d} fill={color} />
        {/each}
        <path d="M1806 1660H1824M1806 2206H1824M1822 1662V2204" stroke="#000" stroke-width="4" />
        <path d="M5554 1667H5570M5554 2203H5570" stroke="#000" stroke-width="4" />
        <path d="M1825.5 1661V2205" stroke="#5b93e6" stroke-width="3" />

        <!-- boundary condition callout -->
        <path d="M1306 1933H1800" stroke="#ef9a2a" stroke-width="3" />
        <rect x="1116" y="1889" width="189" height="92" fill="#fff" stroke="#ef8a12" stroke-width="3" />
        <rect x="1118.5" y="1891.5" width="184" height="87.5" fill="#fff" stroke="#111" stroke-width="2.5" />
        <rect x="1119.5" y="1892.5" width="182" height="41" fill="#b3b3b3" />
        <path d="M1118 1934.5H1303" stroke="#111" stroke-width="2" />
        <text class="arial" x="1125" y="1922" textLength="170" lengthAdjust="spacingAndGlyphs">Inlet Mass Flow</text>
        <text class="arial" x="1125" y="1967" textLength="98" lengthAdjust="spacingAndGlyphs">2.75 kg/s</text>

        <!-- coordinate system -->
        <path d="M1806 1933V1856M1806 1933H1906" fill="none" stroke="#1f7a00" stroke-width="3" />
        <path d="M1806 1835L1797 1857H1815Z" fill="url(#arrowgreen)" />
        <path d="M1906 1933L1881 1923V1943Z" fill="#3aa414" />
        <circle cx="1806" cy="1933" r="9" fill="#1f6a08" />
        <path d="M1819 1933H1832M1825.5 1928V1938" stroke="#8fb0e8" stroke-width="2" />
        <g class="axis dark">
          <text x="1810" y="1828">Y</text><text x="1812" y="1928">Z</text><text x="1909" y="1928">X</text>
        </g>

        <!-- reference triad -->
        <path d="M744 3505V3472" stroke="#2c6a1c" stroke-width="8" /><path d="M744 3505V3472" stroke="#7fbf70" stroke-width="3" />
        <path d="M744 3454L736 3474H752Z" fill="#1f6a08" />
        <path d="M752 3515H790" stroke="#a32418" stroke-width="11" /><path d="M752 3515H788" stroke="#e07a6c" stroke-width="4" />
        <path d="M806 3515L787 3506.5V3523.5Z" fill="#b52a1c" />
        <circle cx="744" cy="3515" r="10" fill="#1c1470" stroke="#1a1ae0" stroke-width="2" />
        <g class="axis">
          <text x="736" y="3452" fill="#3c8e2c">Y</text><text x="805" y="3524" fill="#e0392a">X</text>
        </g>
        <text class="front" x="687" y="3621" textLength="74">*Front</text>
      </svg>

      <div class="hud">
        {#each hudTools as [name, width, state]}
          <div class="tool {state ?? ''}" style:width="{width}px">{@render icon(name)}</div>
        {/each}
      </div>

      <div class="doctools">
        <svg viewBox="0 0 26 28"><path d="M1 1.5H25V27H1ZM0 2.5H26" /><path class="solidfill" d="M4 15L11 8V22Z" /></svg>
        <svg viewBox="0 0 26 28"><path d="M1 1.5H25V27H1ZM0 2.5H26" /><path class="solidfill" d="M22 15L15 8V22Z" /></svg>
        <svg viewBox="0 0 26 28"><path d="M3 23.5H23" class="thick" /></svg>
        <svg viewBox="0 0 26 28"><path d="M8 8V3H25V16H19M1 10H18V23H1Z" /></svg>
        <svg viewBox="0 0 26 28"><path d="M3 4L23 24M23 4L3 24" /></svg>
      </div>

      <div class="taskpane">
        {#each paneTabs as name, i}
          <div class="ptab" class:active={i === 0}>{@render icon(name)}</div>
        {/each}
      </div>

      <div class="collapse"><svg viewBox="0 0 6 10"><path d="M6 0V10L0 5Z" fill="#444" /></svg></div>
    </section>
  </main>

  <div class="sheettabs">
    <div class="sheetnav">
      <svg viewBox="0 0 133 29"><path d="M35 0V29M68 0V29M101 0V29M132 0V29" stroke="#72787e" stroke-width="2" /><path d="M14 7V22M28 7V22L18 14.5ZM54 7V22L44 14.5ZM82 7V22L92 14.5ZM110 7V22L120 14.5ZM123 7V22" fill="#7b8085" stroke="#7b8085" stroke-width="1.5" /></svg>
    </div>
    <div class="stab active"><span use:fit={70}>Model</span></div>
    <div class="stab views"><span use:fit={94}>3D Views</span></div>
    <div class="stab motion"><span use:fit={161}>Motion Study 1</span></div>
  </div>

  <footer class="status">
    <div class="edition"><span use:fit={592}>SOLIDWORKS Education Edition - Instructional Use Only</span></div>
    <div class="scell s1"></div>
    <div class="scell s2"><span use:fit={121}>Editing Part</span></div>
    <div class="scell s3"></div>
    <div class="units"><span use:fit={70}>MMGS</span><svg viewBox="0 0 11 8"><path d="M0 8L5.5 0L11 8Z" /></svg></div>
    <div class="tag">{@render icon('tag')}</div>
  </footer>

  <div class="taskbar">
    <div class="start"><svg viewBox="0 0 32 32"><path d="M0 4.5L13 2.7V15.3H0ZM14.6 2.5L32 0V15.3H14.6ZM0 16.8H13V29.4L0 27.6ZM14.6 16.8H32V32L14.6 29.6Z" fill="#fff" /></svg></div>
    <div class="search">
      <svg viewBox="0 0 33 33"><circle cx="20" cy="12" r="10.5" fill="none" stroke="#222" stroke-width="2.4" /><path d="M12.5 19.5L1 32" stroke="#222" stroke-width="2.4" /></svg>
      <span use:fit={254}>Type here to search</span>
    </div>
    <div class="app-btn tv"><svg viewBox="0 0 34 32"><path d="M1 0V6H23V0M1 32V26H23V32M1 10H23V22H1ZM31 0V8M31 15V32" fill="none" stroke="#f0f0f0" stroke-width="2.4" /><path d="M28.5 9.5H33.5V14H28.5Z" fill="#f0f0f0" /></svg></div>
    <div class="app-btn"><svg class="i48" viewBox="0 0 48 48"><circle cx="24" cy="24" r="23" fill="url(#edge)" /><path d="M4 18Q12 2 28 2Q46 6 47 22Q46 33 32 32Q27 31 31 26Q30 14 18 14Q10 14 4 18Z" fill="#5bd06a" opacity=".75" /><path d="M22 20Q14 26 20 37Q28 45 40 40Q32 49 20 46Q4 40 5 24Q10 14 22 20Z" fill="#0e5cb0" /><path d="M22 20Q17 28 24 35Q32 40 44 34Q40 42 33 44Q46 34 45 32Q36 36 30 32Q26 30 31 26Q30 20 22 20Z" fill="#242424" opacity=".85" /></svg></div>
    <div class="app-btn"><svg class="i44" viewBox="0 0 44 36"><path d="M0 1H14L18 5H42V35H0Z" fill="#d9980e" /><path d="M0 8H44V35H0Z" fill="#fbd768" /><path d="M8 35V22Q8 19 11 19H33Q36 19 36 22V35H28V28H16V35Z" fill="#3c8ee0" /></svg></div>
    <div class="app-btn sw">
      <svg class="i48" viewBox="0 0 48 48"><path d="M3 7L22 1L44 7V32L26 38L5 32Z" fill="#c8281e" /><path d="M3 7L22 1L44 7L24 13Z" fill="#e8503c" /><path d="M24 13L44 7V32L26 38Z" fill="#8a1410" /><text x="3" y="30" class="swl" textLength="38" lengthAdjust="spacingAndGlyphs">SW</text><text x="10" y="46" class="swy" textLength="37">2018</text></svg>
    </div>
    <div class="app-btn fs">
      <svg class="i48" viewBox="0 0 16 16"><rect width="16" height="16" fill="#fff" /><g transform="translate(-.3 -.1)">{@html icons.traj}</g></svg>
    </div>
    <div class="tray">
      <svg viewBox="0 0 32 32"><path d="M3 5L12 1L24 5V19L14 24L4 19Z" fill="#c8281e" /><text x="4" y="17" class="mini">SW</text><path d="M8 22L14 28L28 13" fill="none" stroke="#5cf01e" stroke-width="4" /></svg>
      <svg viewBox="0 0 32 32"><circle cx="15" cy="15" r="14.5" fill="#2a72b8" /><path d="M1 18L6 13L9 20L13 8L17 21L20 12L24 17" fill="none" stroke="#d8f0ff" stroke-width="2" /><path d="M18 18H31V31H18Z" fill="#3f9a2a" /><path d="M20 24L24 28L29 20" fill="none" stroke="#fff" stroke-width="2" /></svg>
      <svg viewBox="0 0 32 32"><path d="M15 0Q22 4 29 4Q30 22 15 29Q0 22 1 4Q8 4 15 0Z" fill="#fff" /><path d="M15 0V29M1 14H29" stroke="#222" stroke-width="2.4" /><circle cx="22" cy="22" r="9" fill="#23864a" /><path d="M17.5 22L21 26L27 18" fill="none" stroke="#fff" stroke-width="2.4" /></svg>
      <svg viewBox="0 0 32 32"><path d="M9 6H31V22H8M17 22V29M11 29.5H24M2 3H10V13H2ZM6 13V28" fill="none" stroke="#f2f2f2" stroke-width="2" /></svg>
      <svg viewBox="0 0 32 32"><path d="M1 11H6L12 4V28L6 21H1Z" fill="none" stroke="#f2f2f2" stroke-width="2" /><path d="M16 11Q19 16 16 21M21 7Q26 16 21 25M26 3Q34 16 26 29" fill="none" stroke="#f2f2f2" stroke-width="2" /></svg>
    </div>
    <div class="lang"><span use:fit={44}>ENG</span></div>
    <div class="clock"><div><span use:fit={87}>2:05 AM</span></div><div><span use:fit={99}>1/22/2021</span></div></div>
    <div class="peek"></div>
  </div>
</div>

<style>
  :global(html), :global(body) { margin: 0; overflow: hidden; background: #f7f7f7; }
  .defs { position: absolute; width: 0; height: 0; }
  .app {
    zoom: 0.6095238;
    width: 6720px; height: 3780px;
    display: flex; flex-direction: column;
    overflow: hidden;
    background: #f7f7f7; color: #111;
    font: 24px/26px 'Open Sans', 'Noto Sans', sans-serif;
    white-space: nowrap;
  }
  .app :global(svg) { display: block; flex: none; overflow: visible; }
  .app span { display: inline-block; }
  .icon { width: 32px; height: 32px; }
  .caret { width: 11px; height: 7px; fill: #333; }

  /* title bar */
  .titlebar { flex: none; height: 61px; border-bottom: 2px solid #7f7f7f; display: flex; align-items: flex-start; }
  .brand {
    flex: none; box-sizing: border-box; width: 290px; height: 71px; margin-left: 21px; position: relative; z-index: 2;
    border: 2px solid #8c8c8c; border-top: 0;
    background: linear-gradient(160deg, #fff 30%, #f2f2f2 50%, #d6d6d6 95%);
  }
  .brand svg { width: 288px; height: 69px; }
  .solid, .works { font: italic 800 31px 'Open Sans', sans-serif; fill: #d13a24; }
  .works { font-weight: 400; }
  .flyout { flex: none; box-sizing: border-box; width: 43px; height: 61px; padding: 19px 0 0 15px; border-right: 3px solid #a8a8a8; }
  .flyout svg { width: 13px; height: 25px; }
  .titletools { display: flex; align-items: flex-start; margin-left: 55px; padding-top: 7px; }
  .tool { flex: none; box-sizing: border-box; height: 52px; display: flex; align-items: center; justify-content: center; }
  .tool .icon { width: 36px; height: 36px; }
  .pressed { background: #b2b2b2; border: 2px solid #6a6a6a; }
  .boxed { border: 2px solid #9a9a9a; border-left: 0; background: #fbfbfb; }
  .dim .caret { fill: #8f8f8f; }
  .doctitle { margin-left: 2376px; padding-top: 20px; width: 154px; }
  .helpsearch {
    margin: 9px 0 0 2379px; box-sizing: border-box; width: 403px; height: 45px; border: 2px solid #111; flex: none;
    display: flex; align-items: center; padding-left: 9px; background: #eff1f4;
  }
  .qmark { width: 34px; height: 34px; }
  .qmark text { font: bold 25px 'Open Sans', sans-serif; fill: #2a6496; }
  .placeholder { color: #6b6b6b; margin-left: 9px; }
  .lens { width: 34px; height: 34px; margin-left: 18px; }
  .helpsearch .caret { margin-left: 12px; }
  .windowtools { display: flex; align-items: center; height: 64px; margin-left: 22px; }
  .person { width: 26px; height: 36px; }
  .question { font-weight: 700; font-size: 38px; width: 20px; margin: 0 22px 0 28px; color: #444; }
  .win { width: 28px; height: 24px; margin-left: 21px; }
  .win + .win { margin-left: 24px; }

  /* ribbon */
  .ribbon { flex: none; height: 160px; padding-top: 12px; display: flex; }
  .group { flex: none; box-sizing: border-box; height: 156px; border-right: 2px solid #c2c2c2; display: flex; }
  .g1 { width: 222px; flex-direction: column; padding-left: 15px; }
  .g2 { width: 162px; } .g3 { width: 188px; } .g4 { width: 121px; }
  .g5 { width: 239px; padding-left: 2px; } .g6 { width: 298px; } .g7 { width: 200px; padding-left: 3px; border: 0; }
  .cmd { height: 52px; display: flex; align-items: center; gap: 16px; }
  .column { width: 52px; display: grid; grid-template-rows: repeat(3, 52px); }
  .g2 .column { width: 58px; } .g3 .column { width: 53px; } .g4 .column { width: 57px; }
  .g6 .column:last-child { width: 47px; }
  .cell { display: flex; align-items: center; justify-content: center; box-sizing: border-box; }
  .g7 .column { width: 51px; }
  .g7 .cell:nth-child(-n + 2) { background: #b2b2b2; border: 2px solid #6a6a6a; }
  .big { display: flex; flex-direction: column; align-items: center; padding-top: 27px; width: 96px; }
  .big.raised { padding-top: 13px; }
  .big .icon { margin-bottom: 6px; }
  .g3 .big { width: 133px; } .g4 .big { width: 56px; } .g6 .big { width: 192px; } .g7 .big { width: 128px; }
  .line { height: 26px; }
  .drop { margin-top: 28px; }
  .loadbtn { box-sizing: border-box; width: 153px; background: #b2b2b2; border: 2px solid #666; }
  .loadbtn .big { width: 149px; padding-top: 25px; }
  .sidecaret { padding: 126px 0 0 13px; }

  /* workspace */
  .workspace { position: relative; flex: none; height: 3394px; border-top: 2px solid #858585; display: grid; grid-template-columns: 661px 1fr; }
  .commandtabs { position: absolute; z-index: 2; left: 0; top: 0; display: flex; height: 45px; }
  .ctab {
    box-sizing: border-box; height: 45px; background: #d5d5d5; border-right: 2px solid #8c8c8c; border-bottom: 2px solid #8c8c8c;
    display: flex; align-items: center; justify-content: center; color: #222; padding-left: 2px;
  }
  .ctab.active { background: #f7f7f7; border-bottom-color: #f7f7f7; font-weight: 600; color: #111; }
  .panel { background: #f7f7f7; border-right: 2px solid #8c8c8c; box-sizing: border-box; padding-top: 45px; overflow: hidden; }
  .grip { height: 30px; margin: 4px 4px 9px 0; border-top: 2px solid #c4c4c4; border-bottom: 2px solid #c4c4c4; display: flex; align-items: center; justify-content: center; box-sizing: border-box; }
  .grip i { width: 10px; height: 10px; border: 2px solid #999; border-radius: 50%; background: #ddd; margin-top: -2px; }
  .managertabs { display: flex; height: 53px; width: 656px; overflow: hidden; }
  .mtab { flex: none; box-sizing: border-box; width: 80px; height: 53px; border: 2px solid #999; border-left: 0; background: #d5d5d5; display: flex; align-items: center; justify-content: center; padding-left: 2px; }
  .mtab .icon { width: 38px; height: 37px; }
  .mtab.active { background: #fafafa; border-bottom-color: #fafafa; }
  .mtab.active .icon { width: 33px; height: 32px; }
  .scrollers { display: flex; margin-left: 29px; padding-top: 15px; }
  .scrollers span { box-sizing: border-box; width: 38px; height: 38px; border: 2px solid #b0b0b0; background: #f0f0f0; padding: 9px 0 0 13px; }
  .scrollers span + span { border-left: 0; }
  .scrollers svg { width: 8px; height: 12px; }
  .projects { height: 404px; padding-top: 9px; box-sizing: border-box; }
  .tree { display: flex; flex-direction: column; }
  .row { height: 40px; display: flex; align-items: center; }
  .guide { width: 46px; height: 40px; }
  .dots { fill: none; stroke: #777; stroke-width: 1.6; stroke-dasharray: 2 2; }
  .rowicon { width: 45px; padding-left: 4px; }
  .label { height: 40px; line-height: 39px; padding: 0 5px 0 4px; }
  .label.selected { background: #3374d8; color: #fff; }
  .splitter { display: flex; height: 10px; width: 656px; margin-bottom: 1px; }
  .splitter i { flex: 1; background: linear-gradient(#8d91a8 0 25%, #bcc2d8 25% 60%, #55587a 60%); }
  .splitter svg { width: 55px; height: 10px; }

  .viewport {
    position: relative; overflow: hidden; border-right: 3px solid #222;
    background:
      radial-gradient(ellipse 2900px 1500px at 2900px 3300px, #fff 30%, rgba(255, 255, 255, 0) 100%),
      linear-gradient(rgba(244, 246, 250, 0) 76%, #f4f6fa 100%),
      linear-gradient(rgba(255, 255, 255, 0) 54%, rgba(255, 255, 255, .38) 61%, rgba(255, 255, 255, .76) 66%, rgba(255, 255, 255, .93) 71%, #fff 77%),
      radial-gradient(ellipse 6000px 2786px at 625px -666px, #fff 57%, rgba(255, 255, 255, .86) 64%, rgba(255, 255, 255, .55) 73%, rgba(255, 255, 255, .2) 85%, rgba(255, 255, 255, 0) 97%),
      radial-gradient(ellipse 1500px 1700px at 6056px 300px, rgba(240, 242, 247, .9), rgba(240, 242, 247, 0)),
      linear-gradient(90deg, #dfe3ec 0, #e3e6ee 30%, #dfe1eb 55%, #dadbe7 78%, #dddfe9 88%, #e4e6ee 100%);
  }
  .scene { position: absolute; left: 0; top: 0; width: 6057px; height: 3394px; }
  .arial { font: 24px 'Liberation Sans', Arial, sans-serif; fill: #111; }
  .axis { font: 26px 'Open Sans', sans-serif; font-weight: 300; }
  .axis.dark { fill: #174a0c; }
  .front { font: bold 24px 'Open Sans', sans-serif; fill: #111; }
  .hud { position: absolute; left: 2673px; top: 4px; display: flex; }
  .doctools { position: absolute; left: 5800px; top: 16px; display: flex; gap: 26.5px; }
  .doctools svg { width: 26px; height: 28px; fill: none; stroke: #9a9a9a; stroke-width: 2.5; }
  .doctools .thick { stroke-width: 6; }
  .doctools .solidfill { fill: #9a9a9a; stroke: none; }
  .taskpane { position: absolute; right: -3px; top: 101px; width: 54px; border: 2px solid #8c8c8c; border-right: 0; border-bottom: 0; box-sizing: border-box; z-index: 2; }
  .ptab { box-sizing: border-box; height: 48px; border-bottom: 2px solid #8c8c8c; background: #dadada; display: flex; align-items: center; justify-content: center; padding-right: 3px; }
  .ptab.active { background: #fff; }
  .ptab .icon { width: 36px; height: 36px; }
  .collapse { position: absolute; left: -1px; top: 1656px; width: 15px; height: 76px; border: 2px solid #aaa; border-left: 0; background: #fdfdfd; display: flex; align-items: center; justify-content: center; }
  .collapse svg { width: 6px; height: 10px; }

  /* bottom bars */
  .sheettabs { flex: none; box-sizing: border-box; height: 31px; border-top: 2px solid #858585; display: flex; }
  .sheetnav { width: 134px; background: #a5abb0; }
  .sheetnav svg { width: 133px; height: 29px; }
  .stab { box-sizing: border-box; display: flex; justify-content: center; line-height: 26px; border-right: 2px solid #8c8c8c; background: #d5d5d5; }
  .stab.active { width: 114px; background: #f9f9f9; font-weight: 700; padding-left: 4px; }
  .stab.views { width: 136px; }
  .stab.motion { width: 217px; padding-right: 16px; }
  .status { flex: none; box-sizing: border-box; height: 37px; border-top: 2px solid #8c8c8c; display: flex; align-items: center; padding-top: 2px; }
  .edition { width: 593px; }
  .scell { box-sizing: border-box; height: 33px; border-left: 2px solid #ccc; display: flex; align-items: center; }
  .s1 { width: 17px; margin-left: 5581px; }
  .s2 { width: 141px; padding-left: 6px; }
  .s3 { width: 34px; border-right: 2px solid #ccc; }
  .units { margin-left: 63px; display: flex; align-items: center; width: 252px; }
  .units svg { width: 11px; height: 8px; margin-left: 38px; }
  .taskbar { flex: none; height: 81px; background: linear-gradient(90deg, #222 0, #262626 50%, #2b2b2b 100%); color: #f2f2f2; display: flex; align-items: stretch; }
  .start { width: 97px; display: flex; align-items: center; justify-content: center; }
  .start svg { width: 33px; height: 33px; }
  .search { box-sizing: border-box; width: 687px; border: 1px solid #cfcfcf; background: #f2f2f2; color: #333; display: flex; align-items: center; padding-left: 23px; font-size: 30px; line-height: 40px; }
  .search svg { width: 33px; height: 33px; margin-right: 23px; }
  .app-btn { box-sizing: border-box; width: 97px; display: flex; align-items: center; justify-content: center; }
  .tv { width: 103px; padding-right: 2px; }
  .tv svg { width: 34px; height: 32px; }
  .i48 { width: 48px; height: 48px; }
  .i44 { width: 44px; height: 36px; }
  .sw { background: #4c4c4c; border-bottom: 5px solid #76b4ee; width: 93px; }
  .fs { background: #a46423; border-bottom: 5px solid #f58518; width: 98px; margin-left: 3px; }
  .swl { font: bold 22px 'Open Sans', sans-serif; fill: #fff; }
  .swy { font: bold 17px 'Open Sans', sans-serif; fill: #fff; }
  .mini { font: bold 12px 'Open Sans', sans-serif; fill: #fff; }
  .tray { display: flex; align-items: center; gap: 16.5px; margin-left: 5002px; }
  .tray svg { width: 32px; height: 32px; }
  .lang { display: flex; align-items: center; width: 44px; margin-left: 19px; }
  .clock { width: 112px; margin-left: 22px; padding-top: 4px; text-align: center; line-height: 36px; }
  .peek { border-left: 2px solid #777; margin-left: 8px; }
</style>
